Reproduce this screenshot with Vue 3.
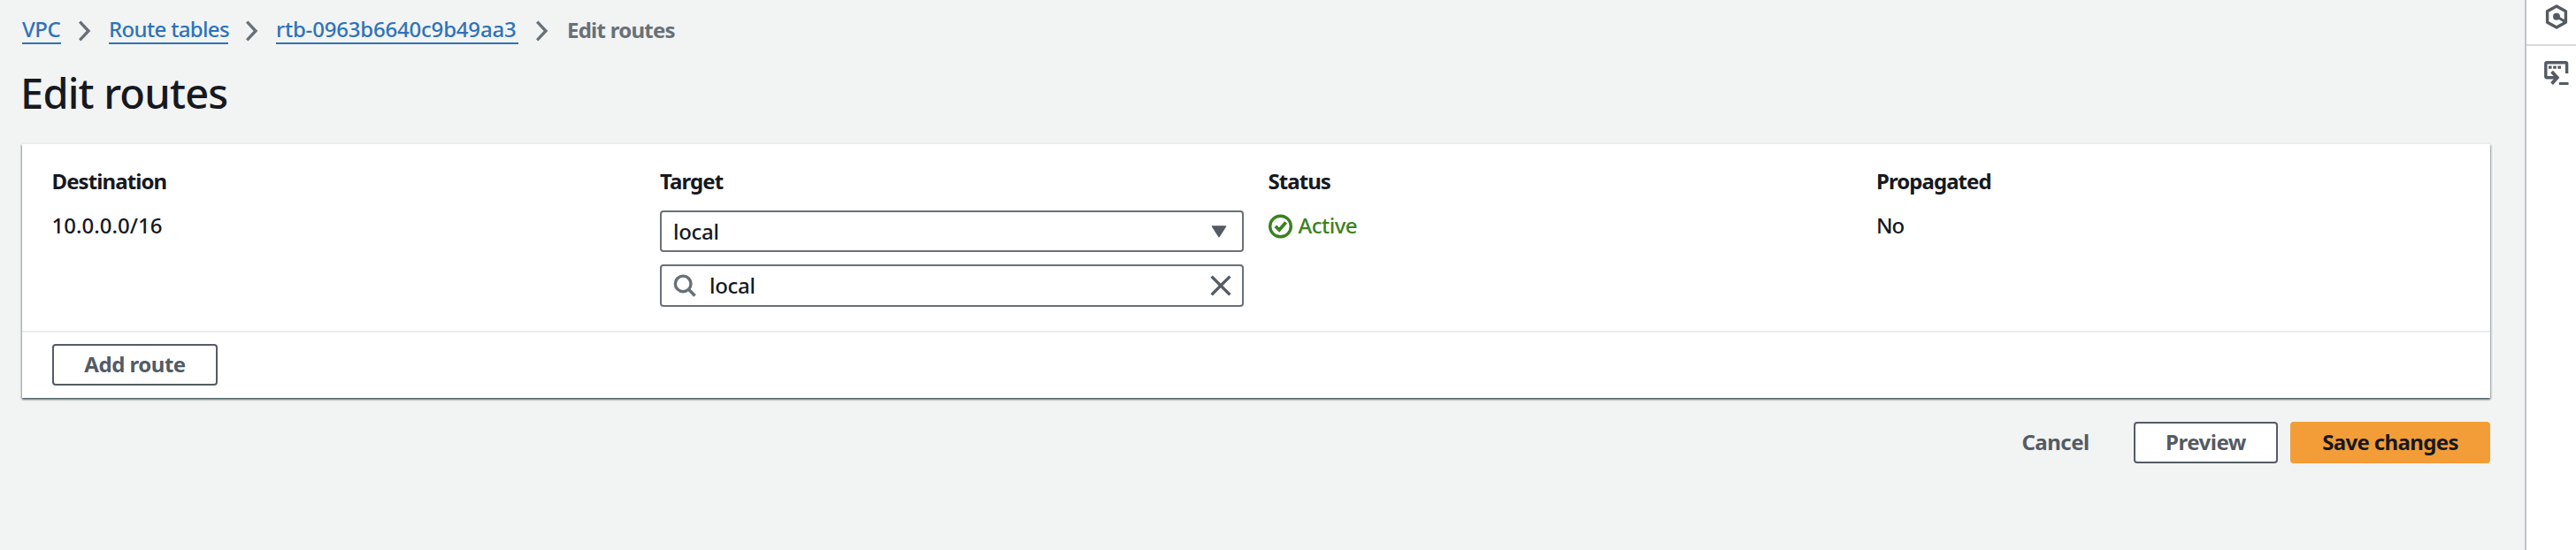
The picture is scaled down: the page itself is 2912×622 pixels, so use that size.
<script setup>
import { ref } from 'vue'

const crumbs = [
  { label: 'VPC', cls: 'vpc' },
  { label: 'Route tables', cls: 'tables' },
  { label: 'rtb-0963b6640c9b49aa3', cls: 'rtb' },
]
const target = ref('local')
</script>

<template>
  <div class="page">
    <main class="main">
      <nav class="crumbs">
        <template v-for="c in crumbs" :key="c.label">
          <a class="crumb" :class="c.cls">{{ c.label }}</a>
          <svg class="chevron" width="14" height="24" viewBox="0 0 14 24">
            <path d="M1.2 1.6 L11 12 L1.2 22.4" fill="none" stroke="#687078" stroke-width="3.4" />
          </svg>
        </template>
        <span class="current">Edit routes</span>
      </nav>
      <h1 class="title">Edit routes</h1>

      <section class="card">
        <div class="grid">
          <div class="col">
            <div class="label">Destination</div>
            <div class="value">10.0.0.0/16</div>
          </div>
          <div class="col">
            <div class="label target">Target</div>
            <div class="field select">
              <span class="grow">{{ target }}</span>
              <svg width="18" height="14" viewBox="0 0 18 14">
                <path d="M1.6 1 H16.4 L9 12.6 Z" fill="#545b64" stroke="#545b64" stroke-width="1.6" stroke-linejoin="round" />
              </svg>
            </div>
            <div class="field search">
              <svg width="26" height="26" viewBox="0 0 26 26">
                <g fill="none" stroke="#687078">
                  <circle cx="11.2" cy="10.9" r="8.8" stroke-width="3.4" />
                  <path d="M17.2 17 L24.6 24.4" stroke-width="3.6" />
                </g>
              </svg>
              <span class="grow">{{ target }}</span>
              <svg width="24" height="24" viewBox="0 0 24 24">
                <path d="M1.6 1.6 L22.4 22.4 M22.4 1.6 L1.6 22.4" stroke="#545b64" stroke-width="3.4" />
              </svg>
            </div>
          </div>
          <div class="col">
            <div class="label status">Status</div>
            <div class="value active">
              <svg width="28" height="28" viewBox="0 0 28 28">
                <g fill="none" stroke="#3b8121">
                  <circle cx="13.5" cy="14" r="11.8" stroke-width="3.4" />
                  <path d="M7.8 13.8 L12.2 18 L19.6 9.4" stroke-width="3.8" />
                </g>
              </svg>
              <span>Active</span>
            </div>
          </div>
          <div class="col">
            <div class="label propagated">Propagated</div>
            <div class="value no">No</div>
          </div>
        </div>
        <div class="card-footer">
          <button class="btn add">Add route</button>
        </div>
      </section>

      <div class="actions">
        <button class="btn cancel">Cancel</button>
        <button class="btn preview">Preview</button>
        <button class="btn save">Save changes</button>
      </div>
    </main>

    <aside class="rail">
      <div class="rail-item first">
        <svg width="26" height="28" viewBox="0 0 26 28">
          <path d="M13 2 L23.4 7.8 V20.2 L13 26 L2.6 20.2 V7.8 Z" fill="none" stroke="#545b64" stroke-width="3.4" stroke-linejoin="round" />
          <circle cx="13" cy="13.8" r="4" fill="#545b64" />
          <path d="M13 13.8 L22.6 19.4" stroke="#545b64" stroke-width="3" />
        </svg>
      </div>
      <div class="rail-item second">
        <svg width="28" height="28" viewBox="0 0 28 28">
          <g fill="none" stroke="#545b64" stroke-width="3.4">
            <path d="M25.6 14 V3 Q25.6 1.8 24.4 1.8 H3 Q1.8 1.8 1.8 3 V17.6 Q1.8 18.8 3 18.8 H14" />
            <path d="M8.6 12 L14.8 18.8 L8.6 25.6" stroke-width="3.8" />
          </g>
          <path d="M5 5.4h3.6v3.4H5z M10.2 5.4h3.6v3.4h-3.6z M15.4 5.4h3.6v3.4h-3.6z M17 24h10.5v3H17z" fill="#545b64" />
        </svg>
      </div>
    </aside>
  </div>
</template>

<style>
body {
  margin: 0;
  background: #f2f3f3;
}
</style>

<style scoped>
.page {
  display: flex;
  height: 622px;
  overflow: hidden;
  background: #f2f3f3;
  color: #16191f;
  font: 500 24px/36px "Noto Sans", "Open Sans", sans-serif;
}
.main {
  flex: 1;
  box-sizing: border-box;
  padding: 15px 39px 0 25px;
}
.crumbs {
  display: flex;
  align-items: flex-start;
  height: 36px;
}
.crumb {
  box-sizing: border-box;
  height: 35px;
  border-bottom: 2px solid #2e73b8;
  color: #2e73b8;
  white-space: nowrap;
}
.crumb.vpc { width: 44px; letter-spacing: -0.4px; }
.crumb.tables { width: 135px; letter-spacing: -0.65px; }
.crumb.rtb { width: 274px; letter-spacing: -0.2px; }
.chevron {
  flex: none;
  margin: 8px 20px 0;
}
.current {
  margin: 1px 0 0 1px;
  color: #687078;
  font-weight: 700;
  letter-spacing: -0.75px;
}
.title {
  margin: 19px 0 0 -2px;
  height: 70px;
  font-size: 47px;
  font-weight: 500;
  line-height: 70px;
  letter-spacing: -0.8px;
}
.card {
  box-sizing: border-box;
  margin-top: 23px;
  height: 287px;
  background: #fff;
  box-shadow: 0 -2px 0 #eaeded, 0 2px 2px rgba(0, 28, 36, 0.5), 1px 1px 2px rgba(0, 28, 36, 0.25), -1px 1px 2px rgba(0, 28, 36, 0.25);
}
.grid {
  display: grid;
  grid-template-columns: repeat(4, 660px);
  column-gap: 27.5px;
  box-sizing: border-box;
  height: 211px;
  padding: 24px 0 0 33.5px;
}
.label {
  height: 36px;
  font-weight: 700;
  letter-spacing: -0.9px;
}
.status { letter-spacing: -0.95px; }
.propagated { letter-spacing: -0.95px; }
.value {
  margin-top: 14px;
  height: 36px;
}
.no { letter-spacing: -1px; }
.active {
  display: flex;
  align-items: center;
  gap: 6px;
  color: #3b8121;
  letter-spacing: -0.5px;
}
.active svg { margin-top: 2px; }
.field {
  display: flex;
  align-items: center;
  box-sizing: border-box;
  height: 47px;
  border: 2px solid #687078;
  border-radius: 4px;
  background: #fff;
  letter-spacing: -0.3px;
}
.select {
  margin-top: 15px;
  padding: 0 17px 0 13px;
}
.search {
  margin-top: 14px;
  height: 48px;
  padding: 0 12.5px 0 12.5px;
}
.search .grow { margin-left: 15.5px; }
.grow { flex: 1; }
.card-footer {
  box-sizing: border-box;
  height: 76px;
  border-top: 2px solid #eaeded;
  padding: 13px 0 0 34px;
}
.btn {
  display: block;
  box-sizing: border-box;
  height: 47px;
  border: 2px solid #545b64;
  border-radius: 4px;
  padding: 0 0 1px;
  background: #fff;
  color: #545b64;
  font: 700 24px/42px "Noto Sans", "Open Sans", sans-serif;
}
.add { width: 187px; letter-spacing: -0.5px; }
.actions {
  display: flex;
  justify-content: flex-end;
  margin-top: 27px;
}
.cancel {
  width: 163px;
  margin-right: 7px;
  border-color: transparent;
  background: transparent;
  letter-spacing: -0.5px;
}
.preview {
  width: 163px;
  margin-right: 14px;
  letter-spacing: -0.5px;
}
.save {
  width: 226px;
  border-color: #f29d38;
  background: #f29d38;
  color: #16191f;
  letter-spacing: -0.65px;
}
.rail {
  box-sizing: border-box;
  width: 58px;
  border-left: 2px solid #bfc5c9;
  background: #fff;
}
.rail-item { box-sizing: border-box; }
.rail-item svg { display: block; }
.first {
  height: 52px;
  border-bottom: 2px solid #d5dbdb;
  padding: 5px 0 0 21px;
}
.second { padding: 17px 0 0 20px; }
</style>
